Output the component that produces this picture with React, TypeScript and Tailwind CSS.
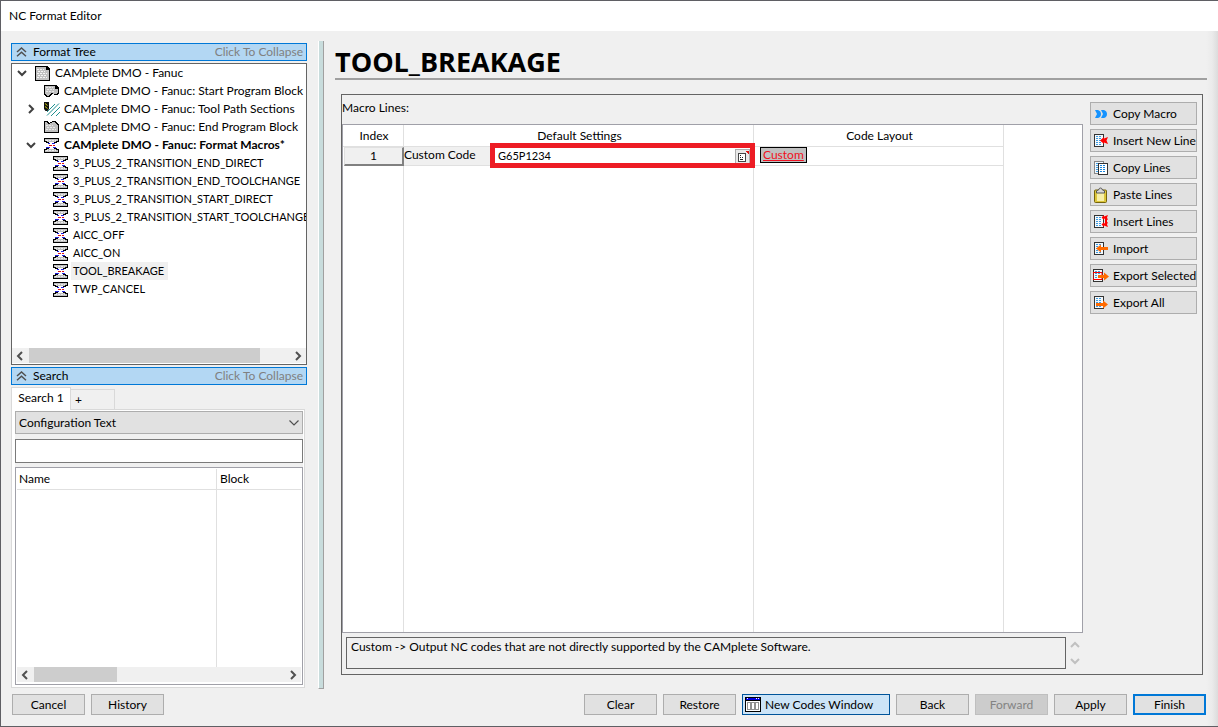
import type { ReactNode } from "react";
import clsx from "clsx";

function Pixels({ w, h, children }: { w: number; h: number; children: ReactNode }) {
  return (
    <svg width={w} height={h} viewBox={`0 0 ${w} ${h}`} shapeRendering="crispEdges" className="shrink-0" aria-hidden="true">
      {children}
    </svg>
  );
}

function Chevron({ dir }: { dir: "up" | "down" | "left" | "right" }) {
  const d = {
    up: "M1 7 5 3 9 7",
    down: "M1 3 5 7 9 3",
    left: "M7 1 3 5 7 9",
    right: "M3 1 7 5 3 9",
  }[dir];
  return (
    <svg width="10" height="10" viewBox="0 0 10 10" fill="none" stroke="currentColor" strokeWidth="2" className="shrink-0" aria-hidden="true">
      <path d={d} />
    </svg>
  );
}

function DoubleUp() {
  return (
    <svg width="11" height="10" viewBox="0 0 11 10" fill="none" stroke="#505050" strokeWidth="1.5" className="shrink-0" aria-hidden="true">
      <path d="M1 5 5.5 1 10 5M1 9.3 5.5 5.3 10 9.3" />
    </svg>
  );
}

function PageIcon() {
  return (
    <Pixels w={15} h={15}>
      <path d="M0 0H12L15 3V15H0Z" fill="#000" />
      <path d="M1 1H11V4H14V14H1Z" fill="#c0c0c0" />
      <path d="M2 3.500H9M3 5.500H10M2 7.500H12M3 9.500H12M2 11.500H12" stroke="#f4f4f4" strokeDasharray="2 1" />
    </Pixels>
  );
}

function StartIcon() {
  return (
    <Pixels w={15} h={14}>
      <path d="M0 1H12L15 4V9L13 11H11L9 10L5 13H2L0 11Z" fill="#000" />
      <path d="M1 2H11V5H14V8L12 10H10L8 9L4 12H3L1 10Z" fill="#c0c0c0" />
      <path d="M2 3.500H9M3 5.500H10M2 7.500H11" stroke="#e8e8e8" strokeDasharray="2 1" />
    </Pixels>
  );
}

function PathIcon() {
  return (
    <svg width="16" height="15" viewBox="0 0 16 15" className="shrink-0" aria-hidden="true">
      <path d="M0 0H5V7L3.500 9H1.500L0 7Z" fill="#111" />
      <path d="M1 1.500 3.500 3.500M1 4.500 3.500 6.500" stroke="#c8c800" />
      <path d="M3 10 11 2M3 13.500 15 1.500M7 14 16 5M12 14 16 10" stroke="#209090" fill="none" />
    </svg>
  );
}

function EndIcon() {
  return (
    <Pixels w={15} h={14}>
      <path d="M0 1H3L5 3L9 1H11L15 4V13H0Z" fill="#000" />
      <path d="M1 2H2L5 4L9 2H10L14 5V12H1Z" fill="#c0c0c0" />
      <path d="M2 5.500H9M3 7.500H12M2 9.500H12" stroke="#e8e8e8" strokeDasharray="2 1" />
    </Pixels>
  );
}

function MacroIcon() {
  return (
    <Pixels w={15} h={15}>
      <path d="M0 0H15V4H13V5H10V4H5V5H2V4H0ZM2 10H5V11H10V10H13V11H15V15H0V11H2Z" fill="#000" />
      <path d="M1 1H14V3H12V4H3V3H1ZM3 11H12V12H14V14H1V12H3Z" fill="#c0c0c0" />
      <path d="M2 2.500H12M2 12.500H12" stroke="#eeeeee" strokeDasharray="2 1" />
      <path d="M4 5.500H6M8 5.500H11M2 9.500H6M9 9.500H12" stroke="#2020e0" />
      <path d="M5 7.500H8M9 7.500H11" stroke="#e01010" />
    </Pixels>
  );
}

function Sheet({ edge = "#333", x = 1 }: { edge?: string; x?: number }) {
  return (
    <g shapeRendering="crispEdges">
      <rect x={x + 0.5} y="1.500" width="9" height="12" fill="#f4f8fb" stroke={edge} />
      <path d={`M${x + 2} 3.5H${x + 8}M${x + 2} 5.5H${x + 8}M${x + 2} 7.5H${x + 8}M${x + 2} 9.5H${x + 8}M${x + 2} 11.5H${x + 8}`} stroke="#3d9be0" strokeDasharray="2 1" />
    </g>
  );
}

function Art({ children }: { children: ReactNode }) {
  return (
    <svg width="16" height="16" viewBox="0 0 16 16" className="shrink-0" aria-hidden="true">
      {children}
    </svg>
  );
}

const art = {
  copyMacro: (
    <Art>
      <path d="M2 4H5Q8 5 8 8Q8 11 5 12H2L4 8ZM8 4H11Q14 5 14 8Q14 11 11 12H8L10 8Z" fill="#1593ff" />
    </Art>
  ),
  insertNew: (
    <Art>
      <Sheet />
      <path d="M7 7.500 11 4V5.500L15 4 13.500 7.500 15 11 11 9.500V11Z" fill="#f00" />
    </Art>
  ),
  copyLines: (
    <Art>
      <Sheet edge="#888" />
      <g shapeRendering="crispEdges">
        <rect x="5.500" y="3.500" width="9" height="11" fill="#fff" stroke="#333" />
        <path d="M7 5.500H13M7 7.500H13M7 9.500H13M7 11.500H13" stroke="#1b86dc" strokeDasharray="2 1" />
      </g>
    </Art>
  ),
  paste: (
    <Art>
      <rect x="1.500" y="3" width="12" height="12.500" rx="1" fill="#dcc63c" stroke="#75640c" />
      <rect x="4" y="6" width="7" height="8" fill="#f7efa8" />
      <path d="M6 2.500A1.500 1.500 0 0 1 9 2.500L11.500 4V6H3.500V4Z" fill="#d8d8d8" stroke="#555" />
    </Art>
  ),
  insertLines: (
    <Art>
      <Sheet />
      <path d="M8.500 3.500 11 1V2.500L15 1 14 3.500 15 6 11 4.500V6ZM8.500 10.500 11 8V9.500L15 8 14 10.500 15 13 11 11.500V13Z" fill="#f00" />
      <path d="M13 3V11" stroke="#f00" strokeWidth="2" />
    </Art>
  ),
  importMacro: (
    <Art>
      <Sheet />
      <path d="M3 7.500 8 3.500V6H15V9H8V11.500Z" fill="#ff6a00" />
    </Art>
  ),
  exportSelected: (
    <Art>
      <Sheet x={0} />
      <path d="M0 4.500H9V11.500H0Z" fill="none" stroke="#f00" />
      <path d="M16 8.500 11 4.500V7H5V10H11V12.500Z" fill="#ff6a00" />
    </Art>
  ),
  exportAll: (
    <Art>
      <Sheet />
      <path d="M15 9.500 10 5.500V8H3V11H10V13.500Z" fill="#ff6a00" />
    </Art>
  ),
};

const macroActions = [
  { label: "Copy Macro", icon: art.copyMacro },
  { label: "Insert New Line", icon: art.insertNew },
  { label: "Copy Lines", icon: art.copyLines },
  { label: "Paste Lines", icon: art.paste },
  { label: "Insert Lines", icon: art.insertLines },
  { label: "Import", icon: art.importMacro },
  { label: "Export Selected", icon: art.exportSelected },
  { label: "Export All", icon: art.exportAll },
];

type Node = {
  label: string;
  level: 0 | 1 | 2;
  Icon: () => ReactNode;
  open?: boolean;
  bold?: boolean;
  selected?: boolean;
};

const nodes: Node[] = [
  { label: "CAMplete DMO - Fanuc", level: 0, Icon: PageIcon, open: true },
  { label: "CAMplete DMO - Fanuc: Start Program Block", level: 1, Icon: StartIcon },
  { label: "CAMplete DMO - Fanuc: Tool Path Sections", level: 1, Icon: PathIcon, open: false },
  { label: "CAMplete DMO - Fanuc: End Program Block", level: 1, Icon: EndIcon },
  { label: "CAMplete DMO - Fanuc: Format Macros*", level: 1, Icon: MacroIcon, open: true, bold: true },
  { label: "3_PLUS_2_TRANSITION_END_DIRECT", level: 2, Icon: MacroIcon },
  { label: "3_PLUS_2_TRANSITION_END_TOOLCHANGE", level: 2, Icon: MacroIcon },
  { label: "3_PLUS_2_TRANSITION_START_DIRECT", level: 2, Icon: MacroIcon },
  { label: "3_PLUS_2_TRANSITION_START_TOOLCHANGE", level: 2, Icon: MacroIcon },
  { label: "AICC_OFF", level: 2, Icon: MacroIcon },
  { label: "AICC_ON", level: 2, Icon: MacroIcon },
  { label: "TOOL_BREAKAGE", level: 2, Icon: MacroIcon, selected: true },
  { label: "TWP_CANCEL", level: 2, Icon: MacroIcon },
];

const levels = ["pl-0", "pl-[9px]", "pl-[18px] text-[11px]"];

function PanelHeader({ title }: { title: string }) {
  return (
    <button type="button" className="flex h-[18px] w-full shrink-0 items-center border border-[#0078d7] bg-[#b3d7f3] pr-[3px] pl-1">
      <DoubleUp />
      <span className="ml-[6px]">{title}</span>
      <span className="ml-auto text-[#808080]">Click To Collapse</span>
    </button>
  );
}

function ScrollBar({ thumb }: { thumb: string }) {
  return (
    <div className="flex h-[15px] shrink-0 items-center bg-[#f0f0f0] text-[#505050]">
      <span className="flex w-[17px] justify-center pr-px">
        <Chevron dir="left" />
      </span>
      <div className="h-full flex-1">
        <div className={clsx("h-full bg-[#cdcdcd]", thumb)} />
      </div>
      <span className="flex w-[17px] justify-center">
        <Chevron dir="right" />
      </span>
    </div>
  );
}

function FormatTree() {
  return (
    <div className="flex h-[302px] shrink-0 flex-col border border-[#646464] bg-white pb-px">
      <ul className="min-h-0 flex-1 overflow-hidden">
        {nodes.map(({ label, level, Icon, open, bold, selected }) => (
          <li key={label} className={clsx("flex h-[18px] items-center whitespace-nowrap", levels[level])}>
            <span className="mr-1 flex w-[19px] shrink-0 justify-center text-[#404040]">
              {open !== undefined && <Chevron dir={open ? "down" : "right"} />}
            </span>
            <span className="flex w-[15px] shrink-0">
              <Icon />
            </span>
            <span className={clsx("ml-[3px] px-[2px] leading-[18px]", bold && "font-bold", selected && "bg-[#f0f0f0] pr-1")}>{label}</span>
          </li>
        ))}
      </ul>
      <ScrollBar thumb="w-[89%]" />
    </div>
  );
}

function SearchPanel() {
  return (
    <div className="mt-[2px] flex min-h-0 flex-1 flex-col pr-[2px]">
      <div className="flex h-[22px] shrink-0 items-end" role="tablist">
        <button type="button" role="tab" aria-selected="true" className="relative z-10 -mb-px h-[23px] w-[60px] border border-b-0 border-[#d9d9d9] bg-white pb-[2px] whitespace-nowrap">
          Search 1
        </button>
        <button type="button" role="tab" aria-selected="false" className="h-5 w-[44px] border border-b-0 border-l-0 border-[#d9d9d9] pl-1 text-left">
          +
        </button>
      </div>
      <div className="flex min-h-0 flex-1 flex-col border border-[#d9d9d9] bg-white pt-px pr-px pb-[2px] pl-[3px]">
        <div className="flex min-h-0 flex-1 flex-col bg-[#f0f0f0]">
          <div className="relative">
            <select aria-label="Search in" className="block h-[23px] w-full appearance-none border border-[#adadad] bg-[#e1e1e1] px-[3px]">
              <option>Configuration Text</option>
            </select>
            <svg width="10" height="6" viewBox="0 0 10 6" fill="none" stroke="#505050" className="pointer-events-none absolute top-[9px] right-1" aria-hidden="true">
              <path d="M.5 .5 5 5 9.500 .5" strokeWidth="1.200" />
            </svg>
          </div>
          <input aria-label="Search text" className="mt-[5px] h-6 w-full border border-[#7a7a7a] bg-white px-1" />
          <div className="mt-1 flex min-h-0 flex-1 flex-col border border-[#a0a0a8] bg-white px-px pt-px pb-[2px]">
            <div className="min-h-0 flex-1">
              <table className="h-full w-full table-fixed border-separate border-spacing-0 text-left">
                <thead>
                  <tr className="h-[21px]">
                    <th className="w-[200px] border-r border-b border-[#e0e0e0] p-0 pl-[2px] font-normal">Name</th>
                    <th className="border-b border-[#e0e0e0] p-0 pl-[3px] font-normal">Block</th>
                  </tr>
                </thead>
                <tbody>
                  <tr>
                    <td className="border-r border-[#e0e0e0]" />
                    <td />
                  </tr>
                </tbody>
              </table>
            </div>
            <ScrollBar thumb="w-1/3" />
          </div>
        </div>
      </div>
    </div>
  );
}

function MacroTable() {
  return (
    <div className="min-h-0 flex-1 border border-[#a0a0a8] bg-white">
      <table className="h-full w-full table-fixed border-separate border-spacing-0">
        <colgroup>
          <col className="w-[61px]" />
          <col className="w-[350px]" />
          <col className="w-[250px]" />
          <col />
        </colgroup>
        <thead>
          <tr className="h-[22px]">
            <th className="border-r border-b border-[#e0e0e0] p-0 pl-[2px] font-normal">Index</th>
            <th className="border-r border-b border-[#e0e0e0] p-0 pl-[2px] font-normal">Default Settings</th>
            <th className="border-r border-b border-[#e0e0e0] p-0 pl-[2px] font-normal">Code Layout</th>
            <th />
          </tr>
        </thead>
        <tbody>
          <tr className="h-[19px]">
            <td className="h-[19px] p-0 pl-px">
              <button type="button" className="block h-[19px] w-full border-t border-r-2 border-b-2 border-l border-t-[#e0e0e0] border-r-[#808080] border-b-[#808080] border-l-[#e0e0e0] bg-[#f0f0f0]">
                1
              </button>
            </td>
            <td className="relative h-[19px] border-r border-[#e0e0e0] p-0">
              <div className="flex h-[19px] items-center">
                <label htmlFor="custom-code" className="flex h-full w-[86px] shrink-0 items-center border-b border-[#e0e0e0] bg-[#f0f0f0] pb-[2px]">
                  Custom Code
                </label>
                <input id="custom-code" defaultValue="G65P1234" className="h-4 min-w-0 flex-1 pb-[2px] pl-2 text-[11px]" />
                <button type="button" aria-label="Edit code" className="mr-[3px] flex h-[15px] w-[15px] items-center justify-center border border-[#adadad] bg-[#e8e8e8]">
                  <Pixels w={12} h={13}>
                    <rect x="1.500" y="3.500" width="7" height="8" fill="#fff" stroke="#444" />
                    <path d="M3 5.500H4M3 7.500H4M5 7.500H6M3 9.500H6" stroke="#222" />
                    <path d="M9 1H12V4H11V3H10V2H9Z" fill="#e01010" />
                  </Pixels>
                </button>
              </div>
              <div className="pointer-events-none absolute -top-1 -right-[2px] -bottom-[2px] left-[86px] border-[5px] border-[#ed1c24]" />
            </td>
            <td className="h-[19px] border-r border-b border-[#e0e0e0] p-0 pl-[6px]">
              <button type="button" className="mb-[2px] block h-4 border border-black bg-[#c0c0c0] px-[2px] leading-[14px] text-[#f01020] underline">
                Custom
              </button>
            </td>
            <td />
          </tr>
          <tr>
            <td className="border-r border-[#e0e0e0]" />
            <td className="border-r border-[#e0e0e0]" />
            <td className="border-r border-[#e0e0e0]" />
            <td />
          </tr>
        </tbody>
      </table>
    </div>
  );
}

function FooterButton({ children, className }: { children: ReactNode; className?: string }) {
  return (
    <button type="button" className={clsx("flex h-[21px] items-center", className ?? "w-[73px] justify-center border border-[#adadad] bg-[#e1e1e1]")}>
      {children}
    </button>
  );
}

export default function App() {
  return (
    <div className="flex h-screen min-h-[600px] flex-col border-t border-b border-l border-[#5f5f64] bg-[#f0f0f0] font-['Lato','Open_Sans',sans-serif] text-[12px] leading-4 text-black">
      <header className="flex h-[30px] shrink-0 items-center bg-white px-2">NC Format Editor</header>

      <div className="flex min-h-0 flex-1 flex-col bg-linear-to-l from-[#dcdcdc] via-[#ebebeb] via-[6px] to-[#f0f0f0] to-[12px]">
        <main className="flex min-h-0 flex-1 pr-[11px] pl-[10px]">
          <aside className="flex w-[296px] shrink-0 flex-col pt-3 pb-px">
            <PanelHeader title="Format Tree" />
            <div className="h-[2px] shrink-0" />
            <FormatTree />
            <div className="h-[2px] shrink-0" />
            <PanelHeader title="Search" />
            <SearchPanel />
          </aside>

          <div className="mx-[11px] mt-[10px] w-[6px] shrink-0 border-r border-b border-l border-r-[#a0a0a0] border-b-[#a0a0a0] border-l-white bg-[#c8dcdc]" />

          <section className="flex min-w-0 flex-1 flex-col pb-[14px]">
            <h1 className="flex h-[49px] shrink-0 items-end border-b-2 border-[#a0a0a0] font-['Open_Sans',sans-serif] text-[27px] leading-8 font-bold">
              TOOL_BREAKAGE
            </h1>
            <div className="mt-[14px] mr-1 ml-[6px] flex min-h-0 flex-1 border border-[#646464]">
              <div className="flex min-w-0 flex-1 flex-col pb-[5px]">
                <h2 className="h-[29px] shrink-0 pt-[5px]">Macro Lines:</h2>
                <MacroTable />
                <div className="mt-1 ml-1 flex h-8 shrink-0">
                  <p className="flex-1 border border-[#646464] px-1 pt-px">
                    Custom -&gt; Output NC codes that are not directly supported by the CAMplete Software.
                  </p>
                  <div className="flex w-[17px] flex-col items-center justify-between py-[3px] text-[#c0c0c0]">
                    <Chevron dir="up" />
                    <Chevron dir="down" />
                  </div>
                </div>
              </div>
              <div className="ml-[7px] flex w-[112px] shrink-0 flex-col gap-1 pt-[7px] pr-[5px]">
                {macroActions.map(({ label, icon }) => (
                  <button key={label} type="button" className="flex h-[23px] shrink-0 items-center gap-1 border border-[#adadad] bg-[#e1e1e1] pl-[2px] whitespace-nowrap">
                    {icon}
                    {label}
                  </button>
                ))}
              </div>
            </div>
          </section>
        </main>

        <footer className="flex shrink-0 gap-[6px] pt-[5px] pr-3 pb-[11px] pl-[11px]">
          <FooterButton>Cancel</FooterButton>
          <FooterButton>History</FooterButton>
          <div className="flex-1" />
          <FooterButton>Clear</FooterButton>
          <FooterButton>Restore</FooterButton>
          <FooterButton className="w-[148px] gap-1 border border-[#00549a] bg-[#cce4f7] pl-[2px]">
            <Pixels w={16} h={15}>
              <rect width="16" height="15" fill="#000" />
              <rect x="1" y="1" width="14" height="2" fill="#0000e0" />
              <path d="M2 1H3V2H2ZM11 1H12V2H11ZM13 1H14V2H13Z" fill="#fff" />
              <rect x="1" y="4" width="14" height="10" fill="#fff" />
              <path d="M2.500 5.500H5.500V12.500H2.500ZM6.500 5.500H9.500V12.500H6.500ZM10.500 5.500H13.500V12.500H10.500Z" fill="#fff" stroke="#909090" />
            </Pixels>
            New Codes Window
          </FooterButton>
          <FooterButton>Back</FooterButton>
          <button type="button" disabled className="h-[21px] w-[73px] border border-[#bfbfbf] bg-[#cccccc] text-[#838383]">
            Forward
          </button>
          <FooterButton>Apply</FooterButton>
          <FooterButton className="w-[73px] justify-center border-2 border-[#0078d7] bg-[#e1e1e1]">Finish</FooterButton>
        </footer>
      </div>
    </div>
  );
}
